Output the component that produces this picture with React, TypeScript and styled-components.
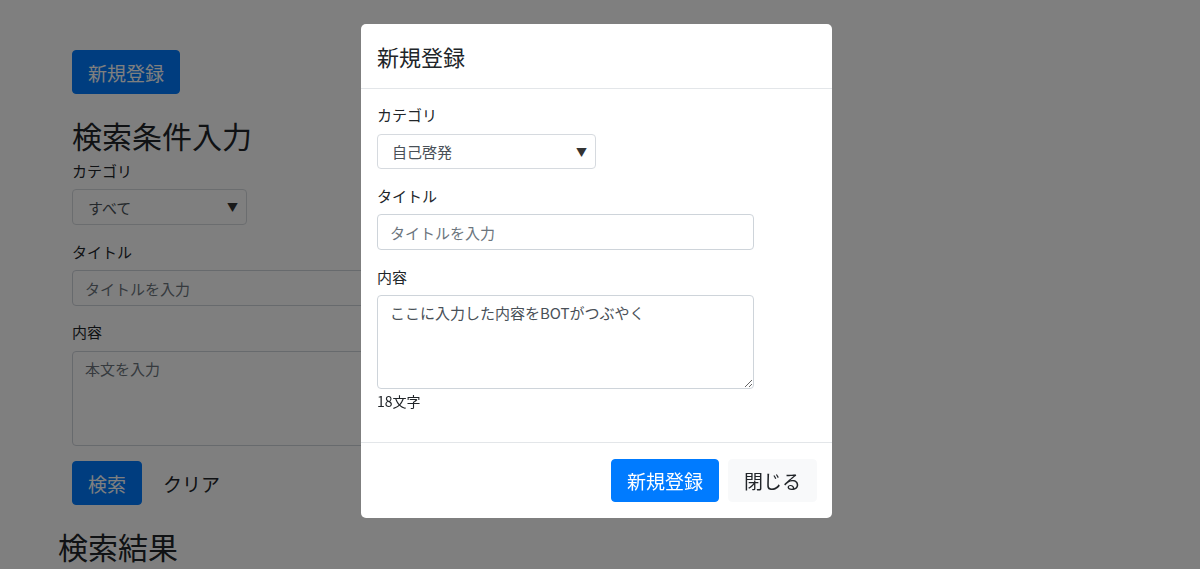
import styled, { createGlobalStyle } from "styled-components";

const GlobalStyle = createGlobalStyle`
  html, body {
    margin: 0;
    padding: 0;
    background: #ffffff;
    color: #212529;
    font-family: "Noto Sans CJK JP", "Noto Sans", sans-serif;
    font-size: 15px;
    overflow: hidden;
  }
  * { box-sizing: border-box; }
`;

const Page = styled.div`
  width: 1200px;
  height: 569px;
  padding: 50px 0 0 58px;
  display: flex;
  flex-direction: column;
`;

const SearchSection = styled.div`
  padding-left: 14px;
  display: flex;
  flex-direction: column;
  align-items: flex-start;
`;

const Button = styled.button<{ $variant: "primary" | "light" | "plain" }>`
  font-family: inherit;
  font-size: 19px;
  line-height: 27px;
  height: 44px;
  padding: 0 15px;
  border-radius: 4px;
  border: 1px solid
    ${(p) => (p.$variant === "primary" ? "#007bff" : p.$variant === "light" ? "#f8f9fa" : "transparent")};
  background: ${(p) => (p.$variant === "primary" ? "#007bff" : p.$variant === "light" ? "#f8f9fa" : "transparent")};
  color: ${(p) => (p.$variant === "primary" ? "#ffffff" : "#212529")};
  cursor: pointer;
`;

const Heading = styled.h2<{ $top: number }>`
  margin: ${(p) => p.$top}px 0 0;
  font-size: 30px;
  font-weight: 400;
  line-height: 36px;
  color: #212529;
`;

const Label = styled.label<{ $top: number }>`
  display: block;
  margin-top: ${(p) => p.$top}px;
  font-size: 15px;
  line-height: 22px;
  color: #212529;
`;

const SelectBox = styled.div<{ $width: number; $height: number; $pad: number }>`
  margin-top: 7px;
  width: ${(p) => p.$width}px;
  height: ${(p) => p.$height}px;
  padding: 0 8px 0 ${(p) => p.$pad}px;
  border: 1px solid #d6dadf;
  border-radius: 4px;
  background: #ffffff;
  display: flex;
  align-items: center;
  justify-content: space-between;
  font-size: 15px;
  color: #495057;
`;

const Caret = styled.span`
  font-size: 11px;
  color: #333;
`;

const TextInput = styled.input<{ $width: number }>`
  display: block;
  margin-top: 7px;
  width: ${(p) => p.$width}px;
  height: 36px;
  padding: 0 12px;
  border: 1px solid #ced4da;
  border-radius: 4px;
  font-family: inherit;
  font-size: 15px;
  color: #495057;
  background: #fff;
  &::placeholder { color: #6c757d; }
`;

const TextArea = styled.textarea<{ $width: number; $height: number }>`
  display: block;
  margin-top: 8px;
  width: ${(p) => p.$width}px;
  height: ${(p) => p.$height}px;
  padding: 6px 12px;
  border: 1px solid #ced4da;
  border-radius: 4px;
  font-family: inherit;
  font-size: 15px;
  line-height: 22px;
  color: #495057;
  background: #fff;
  &::placeholder { color: #6c757d; }
`;

const ButtonRow = styled.div<{ $gap: number }>`
  display: flex;
  align-items: center;
  gap: ${(p) => p.$gap}px;
`;

const Backdrop = styled.div`
  position: fixed;
  inset: 0;
  background: rgba(0, 0, 0, 0.5);
`;

const ModalWrap = styled.div`
  position: fixed;
  inset: 0;
  padding: 24px 7px 0 0;
  display: flex;
  justify-content: center;
  align-items: flex-start;
`;

const Modal = styled.div`
  width: 471px;
  background: #ffffff;
  border-radius: 5px;
  display: flex;
  flex-direction: column;
`;

const ModalHeader = styled.div`
  padding: 16px;
  border-bottom: 1px solid #e3e6e9;
`;

const ModalTitle = styled.h5`
  margin: 0;
  font-size: 22px;
  font-weight: 400;
  line-height: 32px;
  color: #212529;
`;

const ModalBody = styled.div`
  padding: 15px 16px 31px;
`;

const Counter = styled.div`
  margin-top: 2px;
  font-size: 14px;
  line-height: 20px;
  color: #212529;
`;

const ModalFooter = styled.div`
  border-top: 1px solid #e3e6e9;
  padding: 16px 15px 16px;
  display: flex;
  justify-content: flex-end;
`;

export default function App() {
  return (
    <>
      <GlobalStyle />
      <Page>
        <SearchSection>
          <Button $variant="primary">新規登録</Button>
          <Heading $top={23}>検索条件入力</Heading>
          <Label $top={7}>カテゴリ</Label>
          <SelectBox $width={175} $height={36} $pad={15}>
            すべて
            <Caret>▼</Caret>
          </SelectBox>
          <Label $top={16}>タイトル</Label>
          <TextInput $width={600} placeholder="タイトルを入力" />
          <Label $top={15}>内容</Label>
          <TextArea $width={600} $height={95} placeholder="本文を入力" />
          <ButtonRow $gap={5} style={{ marginTop: 15 }}>
            <Button $variant="primary">検索</Button>
            <Button $variant="plain">クリア</Button>
          </ButtonRow>
        </SearchSection>
        <Heading $top={23}>検索結果</Heading>
      </Page>

      <Backdrop />
      <ModalWrap>
        <Modal>
          <ModalHeader>
            <ModalTitle>新規登録</ModalTitle>
          </ModalHeader>
          <ModalBody>
            <Label $top={0}>カテゴリ</Label>
            <SelectBox $width={219} $height={35} $pad={14} style={{ marginTop: 8 }}>
              自己啓発
              <Caret>▼</Caret>
            </SelectBox>
            <Label $top={16}>タイトル</Label>
            <TextInput $width={377} placeholder="タイトルを入力" />
            <Label $top={16}>内容</Label>
            <TextArea $width={377} $height={94} defaultValue="ここに入力した内容をBOTがつぶやく" style={{ marginTop: 7 }} />
            <Counter>18文字</Counter>
          </ModalBody>
          <ModalFooter>
            <ButtonRow $gap={9}>
              <Button $variant="primary" style={{ height: 43 }}>新規登録</Button>
              <Button $variant="light" style={{ height: 43 }}>閉じる</Button>
            </ButtonRow>
          </ModalFooter>
        </Modal>
      </ModalWrap>
    </>
  );
}
